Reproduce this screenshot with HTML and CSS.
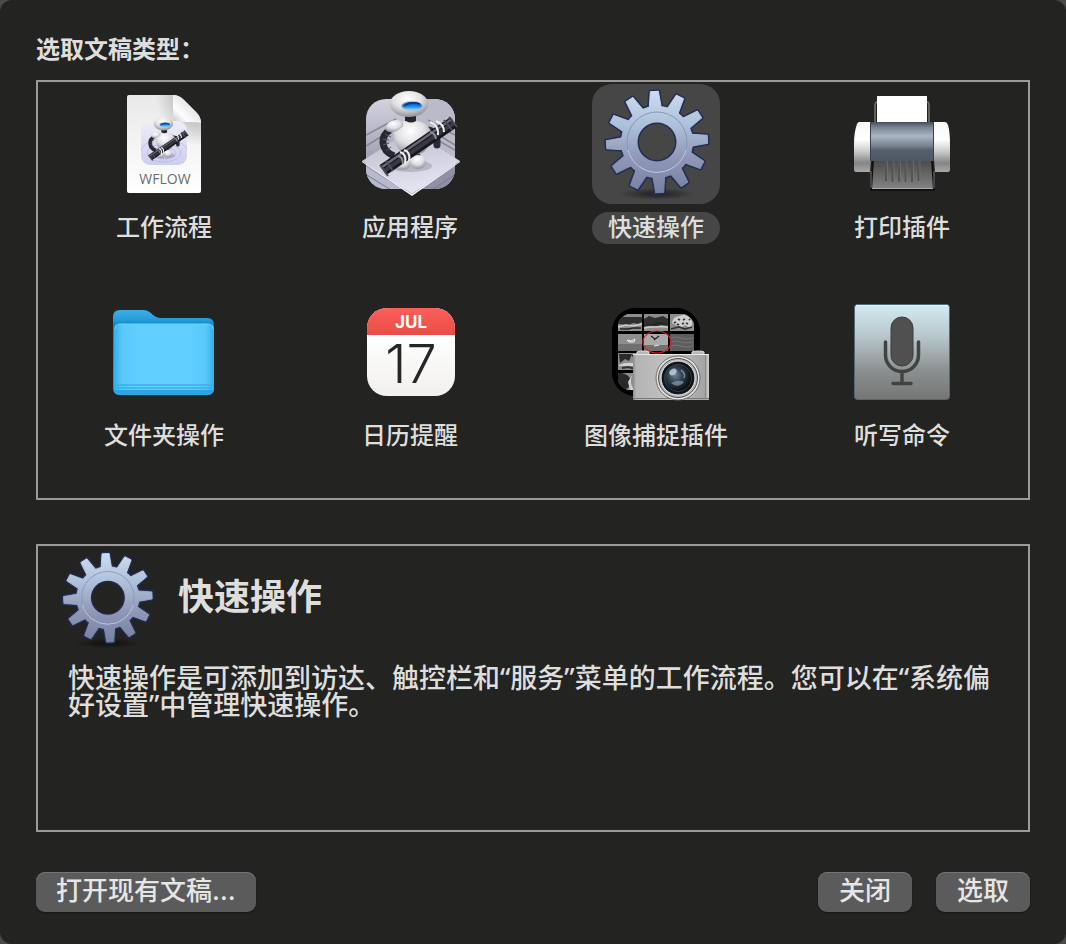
FILE: index.html
```html
<!DOCTYPE html>
<html lang="zh-CN">
<head>
  <meta charset="UTF-8">
  <meta name="viewport" content="width=device-width, initial-scale=1.0">
  <title>选取文稿类型</title>
  <link rel="stylesheet" href="styles.css">
</head>
<body>
  <form class="dialog">
    <h1 id="type-heading">选取文稿类型：</h1>

    <div class="panel types" role="radiogroup" aria-labelledby="type-heading">
      <label class="type">
        <input type="radio" name="type" value="workflow">
        <svg class="icon" viewBox="0 0 128 120" aria-hidden="true">
          <defs>
            <linearGradient id="page" x1="0" y1="0" x2="0" y2="1">
              <stop offset="0" stop-color="#e9e9e9"/><stop offset="1" stop-color="#ffffff"/>
            </linearGradient>
            <linearGradient id="fold" x1="0" y1="1" x2="0.6" y2="0.4">
              <stop offset="0" stop-color="#c4c4c4"/><stop offset="0.5" stop-color="#fdfdfd"/><stop offset="1" stop-color="#e8e8e8"/>
            </linearGradient>
            <radialGradient id="foldShade" cx="1" cy="0" r="1">
              <stop offset="0.5" stop-color="#9a9a9a" stop-opacity="0.55"/><stop offset="1" stop-color="#9a9a9a" stop-opacity="0"/>
            </radialGradient>
            <linearGradient id="tile" x1="0" y1="0" x2="0" y2="1">
              <stop offset="0" stop-color="#eeeef8"/><stop offset="1" stop-color="#cdcdf0"/>
            </linearGradient>
            <radialGradient id="shell" cx="0.45" cy="0.3" r="0.75">
              <stop offset="0" stop-color="#ffffff"/><stop offset="0.5" stop-color="#e0e0e3"/><stop offset="1" stop-color="#858590"/>
            </radialGradient>
            <linearGradient id="eye" x1="0" y1="0" x2="0" y2="1">
              <stop offset="0" stop-color="#1248a0"/><stop offset="0.55" stop-color="#1f86e8"/><stop offset="1" stop-color="#6fe0ff"/>
            </linearGradient>
            <!-- robot holding the pipe, shared with the application icon -->
            <g id="robot">
              <ellipse cx="64" cy="82" rx="22" ry="6" fill="#777790" opacity="0.35"/>
              <path d="M82 46Q92 48 91 61" fill="none" stroke="#2b2b35" stroke-width="7" stroke-linecap="round"/>
              <path d="M58 64L56 75M70 64L72 75" stroke="#3a3a44" stroke-width="6"/>
              <ellipse cx="56" cy="79" rx="9" ry="7" fill="url(#shell)"/>
              <ellipse cx="72" cy="78" rx="8" ry="7" fill="url(#shell)"/>
              <rect x="59" y="30" width="11" height="12" fill="#25252c"/>
              <path d="M48 45Q51 37 60 37Q65 40 70 37Q81 38 85 47Q86 60 78 68Q66 74 55 68Q46 59 48 45Z" fill="url(#shell)"/>
              <path d="M44 46C34 52 34 66 48 72" fill="none" stroke="#282832" stroke-width="7"/>
              <path d="M39 50l6 3M37 55l6 1M37 61l6-2M40 67l5-4" stroke="#55556a" stroke-width="1"/>
              <path d="M39 45Q41 36 51 36Q59 37 57 42Q53 47 47 48Q42 49 39 45Z" fill="url(#shell)"/>
              <ellipse cx="63" cy="20" rx="19" ry="13" fill="url(#shell)"/>
              <ellipse cx="66" cy="22" rx="11" ry="5" fill="#b9bdc6"/>
              <ellipse cx="66" cy="22" rx="10" ry="4" fill="url(#eye)"/>
              <path d="M58 22Q65 17 74 20" fill="none" stroke="#0d3680" stroke-width="1.5"/>
              <path d="M37 86L108 38" stroke="#17171d" stroke-width="12"/>
              <path d="M36 83L106 35" stroke="#686878" stroke-width="2.5"/>
              <path d="M38 87L108 39" stroke="#383844" stroke-width="4"/>
              <path d="M34 81L42 92M40 77L47 87M98 36L106 46M103 33L111 43" stroke="#4e4e5c" stroke-width="2"/>
              <path d="M54 68q7 2 5 11M58 66q7 2 5 11M84 38q9 3 8 13M90 37q8 3 8 11" fill="none" stroke="#eeeef2" stroke-width="2"/>
              <path d="M52 72q5 1 5 8M84 48q5 1 6 7" fill="none" stroke="#8a8a98" stroke-width="2"/>
            </g>
          </defs>
          <path d="M29 11H73Q79 11 84 16L96 28Q101 33 101 39V107Q101 109 99 109H29Q27 109 27 107V13Q27 11 29 11Z" fill="url(#page)"/>
          <path d="M56 11H73V38H101V62H56Z" fill="url(#foldShade)"/>
          <path d="M73 11Q79 11 84 16L96 28Q101 33 101 39Q97 38 91 38H76Q73 38 73 35Z" fill="url(#fold)"/>
          <rect x="41" y="37" width="46" height="44" rx="9" fill="url(#tile)"/>
          <g fill="none" stroke="#b4b4e0" stroke-width="0.7">
            <ellipse cx="64" cy="69" rx="12" ry="6"/><ellipse cx="64" cy="69" rx="17" ry="9"/><path d="M41 66Q47 54 64 55Q81 55 87 65"/>
          </g>
          <use href="#robot" transform="translate(31 29.4) scale(0.515)"/>
          <text class="wflow" x="65" y="100" text-anchor="middle">WFLOW</text>
        </svg>
        <span class="type-name">工作流程</span>
      </label>

      <label class="type">
        <input type="radio" name="type" value="application">
        <svg class="icon" viewBox="0 0 128 120" aria-hidden="true">
          <defs>
            <linearGradient id="room" x1="0" y1="0" x2="0" y2="1">
              <stop offset="0" stop-color="#d3d3df"/><stop offset="0.6" stop-color="#a5a5b7"/><stop offset="1" stop-color="#9292a6"/>
            </linearGradient>
            <linearGradient id="floor" x1="0" y1="0" x2="0.3" y2="1">
              <stop offset="0" stop-color="#b9b9c9"/><stop offset="1" stop-color="#e3e3f1"/>
            </linearGradient>
            <clipPath id="roomClip"><rect x="20" y="15" width="89" height="90" rx="20"/></clipPath>
          </defs>
          <g clip-path="url(#roomClip)">
            <rect x="20" y="15" width="89" height="90" fill="url(#room)"/>
            <path d="M65 15H109V74L65 46Z" fill="#babac9"/>
            <path d="M20 51L50 35M20 62L46 46M82 36L109 51M86 47L109 61M88 54L109 66" stroke="#86869c" stroke-width="1.5"/>
            <path d="M16 80L66 112V120H16Z" fill="#b9b9cd"/>
            <path d="M113 80L66 112V120H113Z" fill="#8f8fa5"/>
            <path d="M16 88L66 119M113 88L66 119" stroke="#77778f"/>
          </g>
          <path d="M16 77L65 46L114 77L66 110Z" fill="url(#floor)"/>
          <path d="M16 77L66 110L114 77V78L66 112L16 78Z" fill="#f1f1fb"/>
          <use href="#robot"/>
        </svg>
        <span class="type-name">应用程序</span>
      </label>

      <label class="type">
        <input type="radio" name="type" value="quick-action" checked>
        <svg class="icon" viewBox="0 0 128 120" aria-hidden="true">
          <defs>
            <linearGradient id="steel" x1="0" y1="0" x2="0" y2="1">
              <stop offset="0" stop-color="#cfdff1"/><stop offset="0.35" stop-color="#adbfd9"/><stop offset="0.65" stop-color="#9197b6"/><stop offset="1" stop-color="#7580a2"/>
            </linearGradient>
            <radialGradient id="gearShadow">
              <stop offset="0.3" stop-color="#000000" stop-opacity="0.4"/><stop offset="1" stop-color="#000000" stop-opacity="0"/>
            </radialGradient>
            <path id="bar" d="M-6 -34L-4 -50.5H4L6 -34V34L4 50.5H-4L-6 34Z"/>
            <g id="teeth" transform="rotate(-3)">
              <use href="#bar"/>
              <use href="#bar" transform="rotate(30)"/>
              <use href="#bar" transform="rotate(60)"/>
              <use href="#bar" transform="rotate(90)"/>
              <use href="#bar" transform="rotate(120)"/>
              <use href="#bar" transform="rotate(150)"/>
              <circle r="35.5"/>
            </g>
            <mask id="rimMask" maskUnits="userSpaceOnUse" x="-60" y="-60" width="120" height="120">
              <use href="#teeth" fill="#fff" stroke="#fff" stroke-width="4" stroke-linejoin="round"/>
              <circle r="18" fill="#000"/>
            </mask>
            <mask id="gearMask" maskUnits="userSpaceOnUse" x="-60" y="-60" width="120" height="120">
              <use href="#teeth" fill="#fff" stroke="#fff" stroke-width="1" stroke-linejoin="round"/>
              <circle r="19.5" fill="#000"/>
            </mask>
            <g id="gear">
              <ellipse cy="52" rx="38" ry="6" fill="url(#gearShadow)"/>
              <rect x="-60" y="-60" width="120" height="120" fill="#202d55" mask="url(#rimMask)"/>
              <rect x="-53" y="-53" width="106" height="106" fill="url(#steel)" mask="url(#gearMask)"/>
              <circle r="30" fill="none" stroke="#8398bd" stroke-width="1"/>
              <path d="M-29 8A30 30 0 0 0 29 8" fill="none" stroke="#bdcaea" stroke-width="1"/>
            </g>
          </defs>
          <use href="#gear" transform="translate(65 58)"/>
        </svg>
        <span class="type-name">快速操作</span>
      </label>

      <label class="type">
        <input type="radio" name="type" value="print-plugin">
        <svg class="icon" viewBox="0 0 128 120" aria-hidden="true">
          <defs>
            <linearGradient id="drum" x1="0" y1="0" x2="0" y2="1">
              <stop offset="0" stop-color="#46505c"/><stop offset="0.15" stop-color="#7d8894"/><stop offset="0.36" stop-color="#aab7c4"/><stop offset="0.6" stop-color="#7b8590"/><stop offset="0.72" stop-color="#56606c"/><stop offset="1" stop-color="#4c5865"/>
            </linearGradient>
            <linearGradient id="cap" x1="0" y1="0" x2="0" y2="1">
              <stop offset="0" stop-color="#f8f8f8"/><stop offset="0.35" stop-color="#ffffff"/><stop offset="0.6" stop-color="#c8c8c8"/><stop offset="0.82" stop-color="#858585"/><stop offset="1" stop-color="#a9a9a9"/>
            </linearGradient>
            <linearGradient id="tray" x1="0" y1="0" x2="0" y2="1">
              <stop offset="0" stop-color="#4a4a4a"/><stop offset="1" stop-color="#858585"/>
            </linearGradient>
          </defs>
          <path d="M39 18Q37 18 37 22V38M89 18Q91 18 91 22V38" fill="none" stroke="#777777" stroke-width="1.5"/>
          <rect x="39" y="12" width="50" height="27" fill="#ffffff"/>
          <path d="M35 76H94L96 106H33Z" fill="url(#tray)"/>
          <path d="M35 76L33 106H96L94 76" fill="none" stroke="#111111" stroke-width="2"/>
          <path d="M34 104.500H95" stroke="#a8a8a8"/>
          <path d="M33 87V104M96 87V104" stroke="#777777"/>
          <path d="M48 77V97M54.500 77V98M61 77V98M67.500 77V98M74 77V98M80.500 77V97" stroke="#545454" stroke-width="2"/>
          <path d="M49.500 77V97M56 77V98M62.500 77V98M69 77V98M75.500 77V98M82 77V97" stroke="#777777" stroke-width="0.6"/>
          <path d="M21 38H33V76L32 88H18Q16 88 16 85V60Q16 48 19 40Q20 38 21 38Z" fill="url(#cap)"/>
          <path d="M96 38H107Q109 38 110 41Q112 48 112 60V85Q112 88 110 88H97L96 76Z" fill="url(#cap)"/>
          <rect x="32" y="38" width="64" height="39" fill="url(#drum)"/>
          <path d="M32.500 38V77M95.500 38V77" stroke="#39424c"/>
        </svg>
        <span class="type-name">打印插件</span>
      </label>

      <label class="type">
        <input type="radio" name="type" value="folder-action">
        <svg class="icon" viewBox="0 -2 128 120" aria-hidden="true">
          <defs>
            <linearGradient id="folderBack" x1="0" y1="0" x2="0" y2="1">
              <stop offset="0" stop-color="#41aee4"/><stop offset="0.12" stop-color="#229cda"/><stop offset="0.17" stop-color="#0f88c8"/><stop offset="1" stop-color="#239ad8"/>
            </linearGradient>
            <linearGradient id="folderEdge" x1="0" y1="0" x2="1" y2="0">
              <stop offset="0" stop-color="#35aee8"/><stop offset="0.08" stop-color="#59c8fb"/><stop offset="0.25" stop-color="#61cfff"/><stop offset="0.75" stop-color="#61cfff"/><stop offset="0.92" stop-color="#59c8fb"/><stop offset="1" stop-color="#35aee8"/>
            </linearGradient>
          </defs>
          <path d="M20 16H43Q48 16 52 20Q56 24 61 24H107Q114 24 114 31V93Q114 101 107 101H20Q13 101 13 94V23Q13 16 20 16Z" fill="url(#folderBack)"/>
          <path d="M14 96V36Q14 30 20 30H108Q114 30 114 36V94Q114 100 108 100H20Q14 100 14 94Z" fill="url(#folderEdge)"/>
          <path d="M15 35Q15 30 20 30H108Q113 30 113 35" fill="none" stroke="#72d6ff"/>
          <path d="M14 91H114M14 94H114" stroke="#39afe8" stroke-width="1.5"/>
          <path d="M14 96H114Q113 101 107 101H20Q14 101 14 96Z" fill="#28a5e2"/>
        </svg>
        <span class="type-name">文件夹操作</span>
      </label>

      <label class="type">
        <input type="radio" name="type" value="calendar-alarm">
        <svg class="icon" viewBox="0 -2 128 120" aria-hidden="true">
          <defs>
            <linearGradient id="calPaper" x1="0" y1="0" x2="0" y2="1">
              <stop offset="0.3" stop-color="#ffffff"/><stop offset="1" stop-color="#f1f0ee"/>
            </linearGradient>
            <linearGradient id="calHead" x1="0" y1="0" x2="0" y2="1">
              <stop offset="0" stop-color="#fb605a"/><stop offset="1" stop-color="#ea4b45"/>
            </linearGradient>
            <clipPath id="calClip"><rect x="21" y="14" width="88" height="88" rx="20"/></clipPath>
          </defs>
          <g clip-path="url(#calClip)">
            <rect x="21" y="14" width="88" height="88" fill="url(#calPaper)"/>
            <rect x="21" y="14" width="88" height="27" fill="url(#calHead)"/>
          </g>
          <text class="cal-month" x="65" y="34" text-anchor="middle">JUL</text>
          <text class="cal-day" x="65" y="89" text-anchor="middle">17</text>
        </svg>
        <span class="type-name">日历提醒</span>
      </label>

      <label class="type">
        <input type="radio" name="type" value="image-capture">
        <svg class="icon" viewBox="0 -2 128 120" aria-hidden="true">
          <defs>
            <linearGradient id="camera" x1="0" y1="0" x2="1" y2="0">
              <stop offset="0" stop-color="#8c8c8c"/><stop offset="0.04" stop-color="#b4b4b4"/><stop offset="0.5" stop-color="#c2c2c2"/><stop offset="0.95" stop-color="#a4a4a4"/><stop offset="1" stop-color="#d0d0d0"/>
            </linearGradient>
            <radialGradient id="lens" cx="0.4" cy="0.4" r="0.6">
              <stop offset="0" stop-color="#6f8496"/><stop offset="0.45" stop-color="#32404e"/><stop offset="1" stop-color="#080c10"/>
            </radialGradient>
            <clipPath id="sheetClip"><rect x="25" y="19" width="78" height="78" rx="16"/></clipPath>
          </defs>
          <rect x="20" y="14" width="88" height="88" rx="23" fill="#000000"/>
          <g clip-path="url(#sheetClip)">
            <g fill="#8d8d8d">
              <rect x="26" y="20" width="24" height="17"/><rect x="52" y="20" width="24" height="17"/><rect x="78" y="20" width="24" height="17"/>
              <rect x="26" y="40" width="24" height="17"/><rect x="52" y="40" width="24" height="17" fill="#aaaaaa"/><rect x="78" y="40" width="24" height="17" fill="#5d5d5d"/>
              <rect x="26" y="59" width="24" height="17"/><rect x="26" y="79" width="24" height="17"/>
            </g>
            <path d="M26 23h24v5l-4 2-5-1-4 2-11-1zM52 25l5-3 6 2 8-2 5 3v7l-7-1-5 2-6-2-6 2z" fill="#303030"/>
            <path d="M26 33l8-2 7 1 9-2M52 34q10-2 24-1" fill="none" stroke="#cccccc" stroke-width="1.500"/>
            <path d="M28 35h8l5-1h8M54 31h6l6-2 8 1" fill="none" stroke="#222222" stroke-width="1.500"/>
            <path d="M80 29q1-7 8-7q6-3 11 3q3 5-1 9l-5-3-4 3-5-3z" fill="#d0d0d0"/>
            <path d="M82 29l2-1M86 25l2 1M85 30l2 1M91 26l2-1M94 29l2 1M97 25l1 1M90 30l2-1M79 35l8-2 6 2 7-2" fill="none" stroke="#333333" stroke-width="1.800"/>
            <path d="M26 50h24v7h-24zM52 51h24v6h-24z" fill="#707070"/>
            <path d="M35 46l4 1 4-2-1 3h-5zM62 52l5-1" fill="none" stroke="#eeeeee" stroke-width="1"/>
            <path d="M59 42l4 3M62 46l5-4" fill="none" stroke="#222222" stroke-width="1.200"/>
            <path d="M79 44q6-2 10 0t12 0M79 48q6-2 10 0t12 0M79 52q6-2 10 0t12 0" fill="none" stroke="#777777"/>
            <path d="M27 60h13l-3 7-4-2-5 4zM30 79q8 2 9 8t-7 9h-6V79z" fill="#292929"/>
            <path d="M27 71q8-4 22-1v2H27zM40 81q-3 8 2 15h-4l-2-8z" fill="#d1d1d1"/>
            <path d="M40 61l4 3 5-2M30 74l6-1 8 2" fill="none" stroke="#333333" stroke-width="2"/>
          </g>
          <ellipse cx="65" cy="48" rx="14" ry="11" fill="none" stroke="#d8212a" stroke-width="1.200"/>
          <path d="M45 60V58Q46 57 51 57Q56 57 57 58V60M100 60V58Q101 57 106 57Q111 57 112 58V60" fill="#b7b7b7" stroke="#e0e0e0"/>
          <rect x="41" y="60" width="76" height="46" rx="1" fill="url(#camera)"/>
          <path d="M41 60.500H117" stroke="#e8e8e8"/>
          <path d="M41 104.500H117" stroke="#777777"/>
          <path d="M113.500 62V105" stroke="#868686"/>
          <circle cx="86" cy="84" r="22" fill="#e4e4e4" stroke="#6e6e6e"/>
          <circle cx="86" cy="84" r="19.500" fill="#b4b4b4" stroke="#505050"/>
          <circle cx="86" cy="84" r="17" fill="#111418" stroke="#f1f1f1"/>
          <circle cx="86" cy="84" r="13.500" fill="url(#lens)" stroke="#46505a" stroke-width="0.700"/>
          <ellipse cx="81" cy="78" rx="4" ry="3" fill="#c6d6e4" opacity="0.8" transform="rotate(-35 81 78)"/>
          <path d="M79 89Q86 95 92 88Q87 85 79 89Z" fill="#8ba7bf" opacity="0.65"/>
          <path d="M89 76Q94 80 92 84" fill="none" stroke="#7890a5" stroke-width="1.500"/>
        </svg>
        <span class="type-name">图像捕捉插件</span>
      </label>

      <label class="type">
        <input type="radio" name="type" value="dictation">
        <svg class="icon" viewBox="0 -2 128 120" aria-hidden="true">
          <defs>
            <linearGradient id="plate" x1="0" y1="0" x2="0" y2="1">
              <stop offset="0" stop-color="#d5eaf2"/><stop offset="0.35" stop-color="#b5c5ca"/><stop offset="0.7" stop-color="#8b8f90"/><stop offset="1" stop-color="#757575"/>
            </linearGradient>
          </defs>
          <rect x="16.500" y="10.500" width="95" height="95" rx="3" fill="url(#plate)" stroke="#52697a"/>
          <path d="M18 11.500H110" stroke="#e6f4fa"/>
          <rect x="53" y="23" width="22" height="49" rx="11" fill="#505050" stroke="#3c3c3c"/>
          <path d="M47.500 48V61A16.500 16.500 0 0 0 80.500 61V48M64 78V89M55 89.500H73" fill="none" stroke="#414343" stroke-width="3.500" stroke-linecap="round"/>
        </svg>
        <span class="type-name">听写命令</span>
      </label>
    </div>

    <section class="panel details">
      <div class="details-header">
        <svg class="details-icon" viewBox="0 0 128 120" aria-hidden="true">
          <use href="#gear" transform="translate(65 58)"/>
        </svg>
        <h2>快速操作</h2>
      </div>
      <p>快速操作是可添加到访达、触控栏和“服务”菜单的工作流程。您可以在“系统偏好设置”中管理快速操作。</p>
    </section>

    <div class="buttons">
      <button type="button" class="open">打开现有文稿…</button>
      <button type="button">关闭</button>
      <button type="submit">选取</button>
    </div>
  </form>
</body>
</html>
```

FILE: styles.css
```css
* {
  box-sizing: border-box;
}

body {
  margin: 0;
  background: #4a4a49;
  color: #dededd;
  font-family: Inter, "Noto Sans CJK SC", sans-serif;
  font-weight: 500;
}

.dialog {
  display: flex;
  flex-direction: column;
  min-height: 100vh;
  padding: 32px 36px;
  border-radius: 12px;
  background: #232322;
}

h1 {
  margin: 0 0 12px;
  font-size: 24px;
  font-weight: 700;
  line-height: 36px;
}

.panel {
  border: 2px solid #9a9a98;
}

/* Document type grid */
.types {
  display: grid;
  grid-template-columns: repeat(4, 1fr);
  row-gap: 48px;
  padding: 2px 3px 46px;
}

.type {
  position: relative;
  display: flex;
  flex-direction: column;
  align-items: center;
  gap: 8px;
}

.type input {
  position: absolute;
  opacity: 0;
}

.icon {
  width: 128px;
  height: 120px;
  border-radius: 20px;
}

.type-name {
  padding: 0 16px;
  border-radius: 16px;
  font-size: 24px;
  line-height: 32px;
  white-space: nowrap;
}

.type input:checked ~ .icon,
.type input:checked ~ .type-name {
  background: #464646;
}

.wflow {
  fill: #6c6c6c;
  font-family: "Open Sans", sans-serif;
  font-size: 14px;
  font-weight: 400;
}

.cal-month {
  fill: #ffffff;
  font-size: 17px;
  font-weight: 700;
}

.cal-day {
  fill: #262626;
  font-size: 54px;
  font-weight: 300;
}

/* Description of the selected type */
.details {
  min-height: 288px;
  margin-top: 44px;
}

.details-header {
  display: flex;
  align-items: center;
  gap: 15px;
  padding: 1px 13px 12px;
}

.details-icon {
  width: 112px;
  height: 105px;
}

h2 {
  margin: 0;
  padding-bottom: 6px;
  font-size: 36px;
  font-weight: 700;
  line-height: 48px;
}

.details p {
  margin: 0;
  padding: 0 24px 24px 30px;
  font-family: "Noto Sans", "Noto Sans CJK SC", sans-serif;
  font-size: 27px;
  line-height: 27px;
}

/* Bottom buttons */
.buttons {
  display: flex;
  gap: 24px;
  margin-top: 40px;
}

.buttons button {
  min-width: 94px;
  height: 40px;
  padding: 0 20px 2px;
  border: none;
  border-radius: 9px;
  background: #5b5b5b;
  box-shadow: inset 0 1px 0 #757575, 0 1px 2px rgba(0, 0, 0, 0.4);
  color: #e6e6e6;
  font: inherit;
  font-size: 26px;
  line-height: 38px;
}

.buttons .open {
  margin-right: auto;
}
```
